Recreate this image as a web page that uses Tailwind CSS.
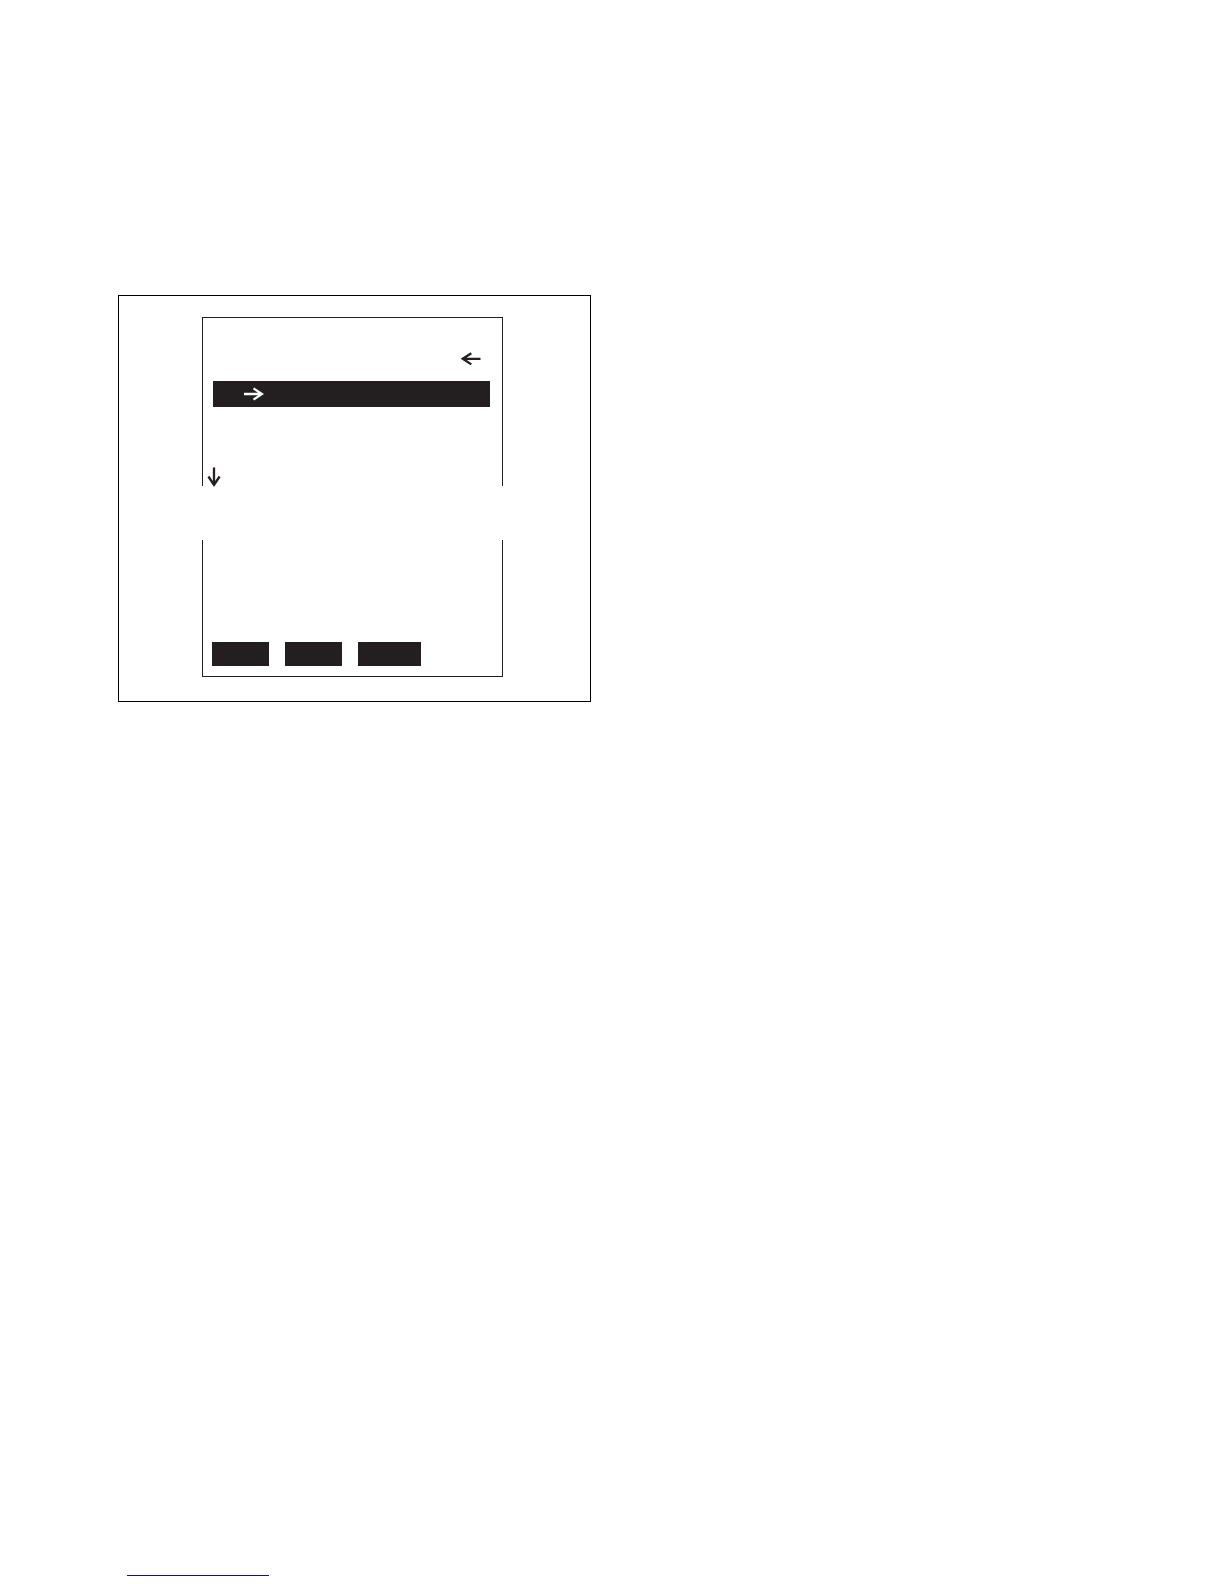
<!DOCTYPE html>
<html lang="en">
<head>
  <meta charset="utf-8"/>
  <meta name="viewport" content="width=device-width, initial-scale=1"/>
  <title>Menu screen</title>
  <script src="https://cdn.jsdelivr.net/npm/@tailwindcss/browser@4"></script>
</head>
<body class="bg-white min-h-screen flex flex-col justify-between font-['Liberation_Sans',sans-serif]">
  <main class="pt-[295px] pl-[118px]">
    <figure class="w-full max-w-[473px] border border-black pt-[21px] pb-6 pl-[83px] pr-[87px]">

      <!-- Upper half of the display, open at the bottom -->
      <section class="border border-b-0 border-[#231f20] pt-[34px] flex flex-col">
        <button type="button" aria-label="Back" class="self-end mr-[21px]">
          <svg class="block w-5 h-[14px]" viewBox="0 0 20 14" fill="none" stroke="#231f20" stroke-width="2.3">
            <path d="M19.500 6.800H1.800M10.300 1.200L1.800 6.800L10.300 12.400"/>
          </svg>
        </button>
        <button type="button" aria-label="Open selected item" class="mt-[15px] ml-[10px] mr-3 h-[26px] pl-[31px] flex items-center bg-[#231f20]">
          <svg class="block w-5 h-[14px]" viewBox="0 0 20 14" fill="none" stroke="white" stroke-width="2.3">
            <path d="M0 7H18M9.500 1.400L18 7L9.500 12.600"/>
          </svg>
        </button>
        <button type="button" aria-label="Scroll down" class="mt-[60px] ml-1 self-start">
          <svg class="block w-[14px] h-[19px] overflow-visible" viewBox="0 0 14 19" fill="none" stroke="#231f20" stroke-width="2.3">
            <path d="M7 0.500V18M1.400 9.500L7 18L12.600 9.500"/>
          </svg>
        </button>
      </section>

      <!-- Lower half with the soft keys -->
      <section class="mt-[54px] border border-t-0 border-[#231f20] pt-[102px] pb-[10px] pl-[9px] flex gap-4">
        <button type="button" aria-label="Soft key 1" class="w-[57px] h-6 bg-[#231f20]"></button>
        <button type="button" aria-label="Soft key 2" class="w-[57px] h-6 bg-[#231f20]"></button>
        <button type="button" aria-label="Soft key 3" class="w-[63px] h-6 bg-[#231f20]"></button>
      </section>
    </figure>
  </main>

  <footer class="pl-[127px] pb-2">
    <a href="#" aria-label="Website" class="block w-[142px] h-4 border-b border-[#14147f]"></a>
  </footer>
</body>
</html>
